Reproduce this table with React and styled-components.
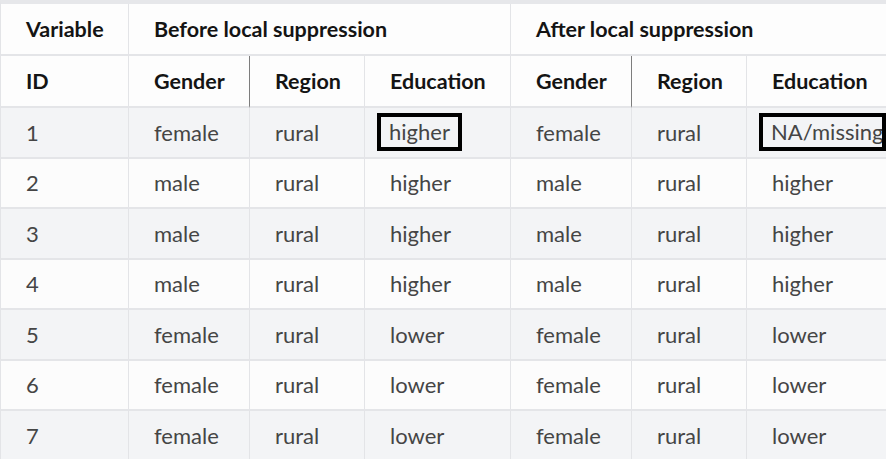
import React from "react";
import styled, { createGlobalStyle } from "styled-components";

const GlobalStyle = createGlobalStyle`
  html, body {
    margin: 0;
    padding: 0;
    overflow: hidden;
    background: #ffffff;
  }
`;

const Frame = styled.div`
  width: 886px;
  height: 459px;
  overflow: hidden;
  font-family: Lato, "Open Sans", sans-serif;
`;

const Table = styled.table`
  border-collapse: separate;
  border-spacing: 0;
  table-layout: fixed;
  width: 906px;
  border-top: 4px solid #e6e7ea;
  border-left: 1px solid #e3e4e7;
`;

const HeadCell = styled.th`
  box-sizing: border-box;
  height: 52px;
  padding: 0 0 0 25px;
  text-align: left;
  font-weight: 700;
  font-size: 21.5px;
  color: #141414;
  background: #fdfdfd;
  border-bottom: 2px solid #e4e5e8;
  border-right: 1px solid ${(p) => (p.$dark ? "#7d7d7d" : "#e3e4e7")};
  white-space: nowrap;
`;

const Row = styled.tr`
  background: ${(p) => (p.$striped ? "#f3f4f6" : "#fcfcfc")};
`;

const Cell = styled.td`
  box-sizing: border-box;
  height: 50.5px;
  padding: 0 0 0 25px;
  font-size: 22px;
  color: #454545;
  border-bottom: 2px solid #e4e5e8;
  border-right: 1px solid #e3e4e7;
  white-space: nowrap;
  vertical-align: middle;
`;

const Marked = styled.span`
  display: inline-block;
  box-sizing: border-box;
  margin-left: -13px;
  padding: 2px 8px 2px 8px;
  border: 4px solid #000;
  line-height: 26px;
  vertical-align: middle;
  ${(p) => (p.$width ? `width: ${p.$width}px; overflow: hidden;` : "")}
`;

const rows = [
  ["1", "female", "rural", "higher", "female", "rural", "NA/missing"],
  ["2", "male", "rural", "higher", "male", "rural", "higher"],
  ["3", "male", "rural", "higher", "male", "rural", "higher"],
  ["4", "male", "rural", "higher", "male", "rural", "higher"],
  ["5", "female", "rural", "lower", "female", "rural", "lower"],
  ["6", "female", "rural", "lower", "female", "rural", "lower"],
  ["7", "female", "rural", "lower", "female", "rural", "lower"],
];

const widths = [128, 121, 115, 146, 121, 115, 160];

export default function App() {
  return (
    <Frame>
      <GlobalStyle />
      <Table>
        <colgroup>
          {widths.map((w, i) => (
            <col key={i} style={{ width: w }} />
          ))}
        </colgroup>
        <thead>
          <tr>
            <HeadCell>Variable</HeadCell>
            <HeadCell colSpan={3}>Before local suppression</HeadCell>
            <HeadCell colSpan={3}>After local suppression</HeadCell>
          </tr>
          <tr>
            <HeadCell>ID</HeadCell>
            <HeadCell $dark>Gender</HeadCell>
            <HeadCell>Region</HeadCell>
            <HeadCell>Education</HeadCell>
            <HeadCell $dark>Gender</HeadCell>
            <HeadCell>Region</HeadCell>
            <HeadCell>Education</HeadCell>
          </tr>
        </thead>
        <tbody>
          {rows.map((r, i) => (
            <Row key={r[0]} $striped={i % 2 === 0}>
              {r.map((v, j) => (
                <Cell key={j}>
                  {i === 0 && j === 3 ? (
                    <Marked>{v}</Marked>
                  ) : i === 0 && j === 6 ? (
                    <Marked $width={127}>{v}</Marked>
                  ) : (
                    v
                  )}
                </Cell>
              ))}
            </Row>
          ))}
        </tbody>
      </Table>
    </Frame>
  );
}
